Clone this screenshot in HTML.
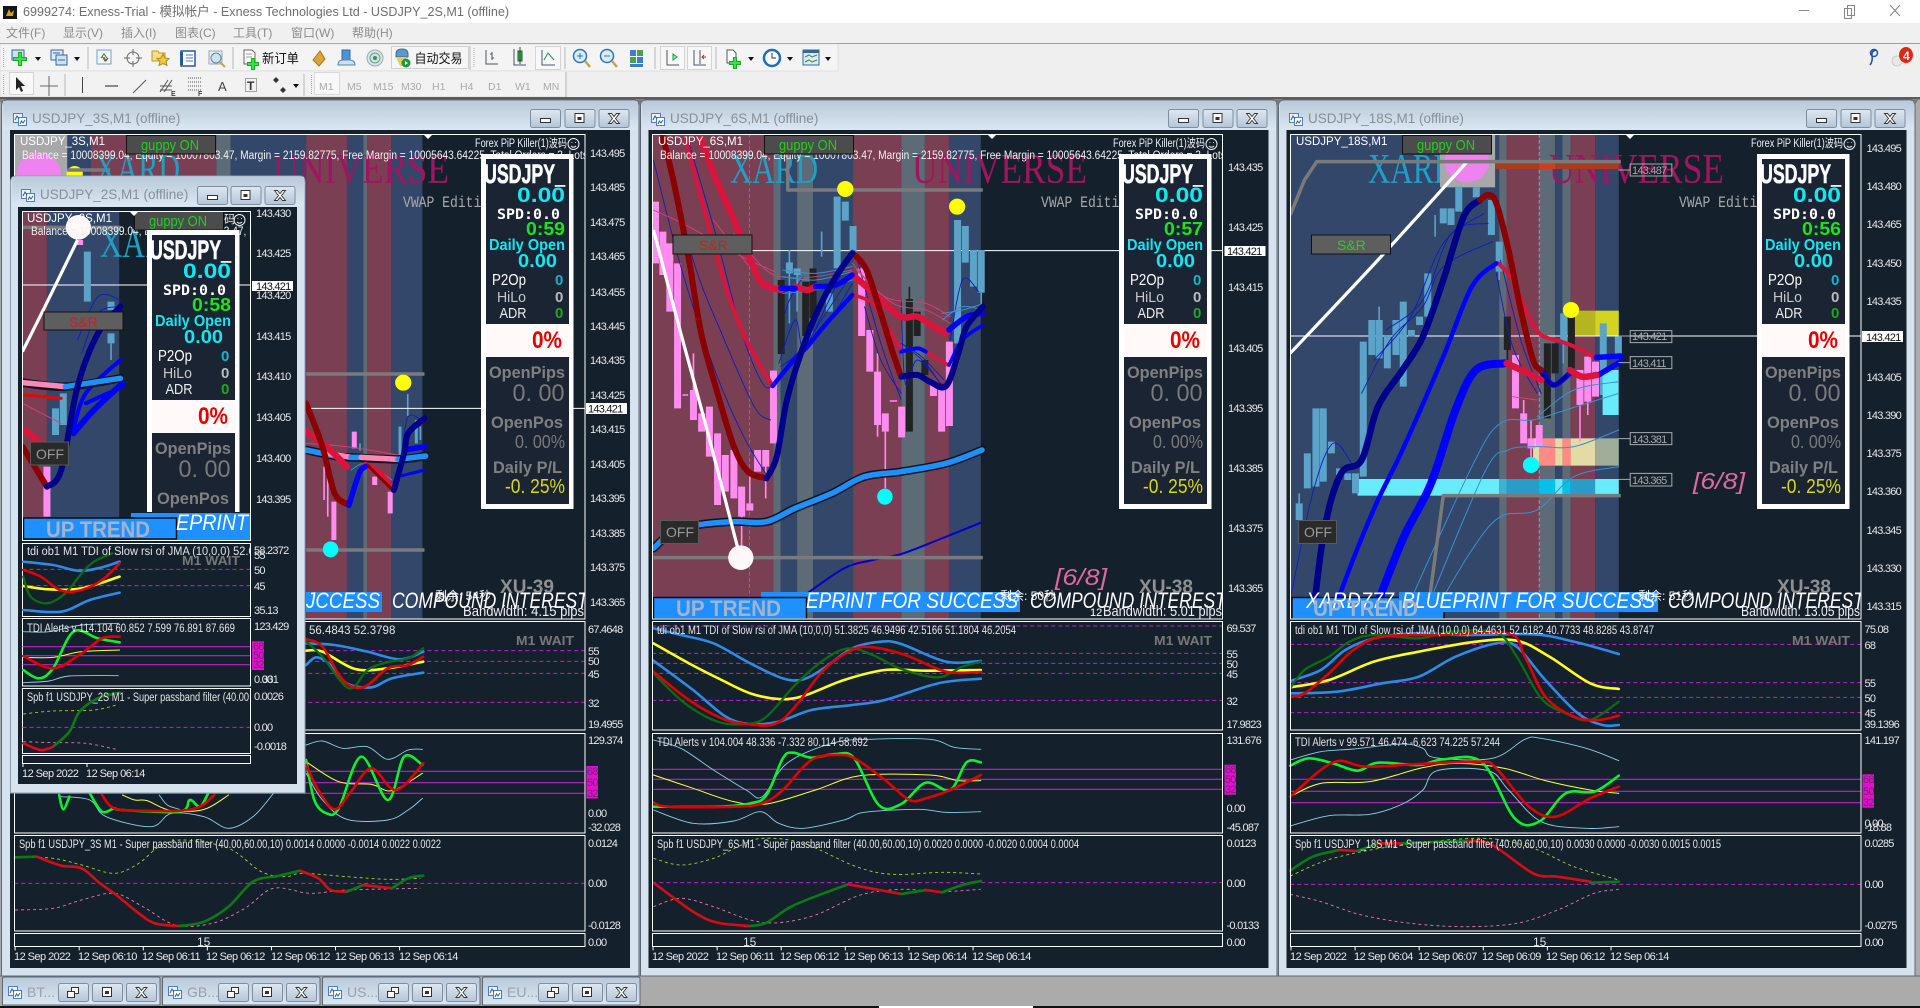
<!DOCTYPE html>
<html><head><meta charset="utf-8"><title>MT4</title>
<style>
html,body{margin:0;padding:0;background:#ababab;width:1920px;height:1008px;overflow:hidden}
svg{display:block}
text{font-family:"Liberation Sans","Noto Sans CJK SC",sans-serif;white-space:pre}
.z *{vector-effect:non-scaling-stroke}
.z polyline,.z path{fill:none;stroke-linejoin:round;stroke-linecap:round}
.a{font-size:11px;letter-spacing:-.75px;fill:#e8e8e8}
.b{letter-spacing:-.55px}
.m{fill:#7a2070!important}
.t{font-size:11.5px;fill:#e4e4e4}
.cap{font-size:13.5px;fill:#8a8f96}
.mn{font-size:12px;fill:#8c8c8c}
.tf{font-size:10.5px;fill:#aaa}
.pk{stroke:#ff8cf0;stroke-width:7;stroke-linecap:butt!important}
.pw{stroke:#ff8cf0;stroke-width:1.6;stroke-linecap:butt!important}
.bc{stroke:#5ba3c8;stroke-width:7;stroke-linecap:butt!important}
.bw{stroke:#5ba3c8;stroke-width:1.6;stroke-linecap:butt!important}
.bk{stroke:#222;stroke-width:7;stroke-linecap:butt!important}
.kw{stroke:#222;stroke-width:1.6;stroke-linecap:butt!important}
.dr{stroke:#8b0000;stroke-width:6}
.cr{stroke:#dc143c;stroke-width:6.5}
.nb{stroke:#00008b;stroke-width:6}
.bl{stroke:#0000ff;stroke-width:5.5}
.tn{stroke:#0a1fc0;stroke-width:.9}
.tp{stroke:#d8407a;stroke-width:.9}
.ts{stroke:#3a90d0;stroke-width:1}
.gl{stroke:#7a7a7a;stroke-width:3.5;stroke-linecap:butt!important}
.wl{stroke:#fff;stroke-width:3.2;stroke-linecap:butt!important}
.ma0{stroke:#10141c;stroke-width:8.5}
.ma{stroke:#1e90ff;stroke-width:5.5}
.lb{stroke:#2e8ae6;stroke-width:2.6}
.rd{stroke:#e00000;stroke-width:2.6}
.dg{stroke:#0b6b12;stroke-width:2.3}
.ye{stroke:#ffff20;stroke-width:2.6}
.lm{stroke:#10ee30;stroke-width:2.6}
.yt{stroke:#ffff40;stroke-width:1}
.lt{stroke:#8ccfe8;stroke-width:.9}
.mg{stroke:#c020c8;stroke-width:1.1;stroke-linecap:butt!important}
.md{stroke:#c020c8;stroke-width:1;stroke-dasharray:4 3;stroke-linecap:butt!important}
.gd{stroke:#a6d030;stroke-width:.9;stroke-dasharray:3 3;stroke-linecap:butt!important}
.pd{stroke:#e878a8;stroke-width:.9;stroke-dasharray:3 3;stroke-linecap:butt!important}
.gr{stroke:#0c7a14;stroke-width:2.6}
.re{stroke:#d80c14;stroke-width:2.6}
.pb{fill:none;stroke:#fff;stroke-width:1}
.hb{font-weight:bold}
.us{stroke:#fff;stroke-width:.6}
</style></head><body>
<svg width="1920" height="1008" viewBox="0 0 1920 1008" xmlns="http://www.w3.org/2000/svg">
<defs>
<linearGradient id="capg" x1="0" y1="0" x2="0" y2="1"><stop offset="0" stop-color="#b9c9da"/><stop offset="1" stop-color="#dbe7f2"/></linearGradient>
<linearGradient id="btg" x1="0" y1="0" x2="0" y2="1"><stop offset="0" stop-color="#dfe8f1"/><stop offset="1" stop-color="#b4c5d8"/></linearGradient>
<g id="bb"><rect x=".5" y=".5" width="30" height="18" rx="2" fill="url(#btg)" stroke="#7e8fa3"/></g>
<g id="bmin"><use href="#bb"/><rect x="10.5" y="9.5" width="10" height="4" fill="#fff" stroke="#333"/></g>
<g id="bmax"><use href="#bb"/><rect x="10.5" y="4.5" width="9" height="9" fill="#fff" stroke="#333"/><rect x="13" y="8" width="4" height="3" fill="#333"/></g>
<g id="bcl"><use href="#bb"/><path d="M10 4.5h3l2.500 3 2.500-3h3l-4 5 4 5h-3l-2.500-3-2.500 3h-3l4-5z" fill="#fff" stroke="#333" stroke-width=".9"/></g>
<g id="brs"><use href="#bb"/><rect x="13.500" y="4.500" width="7" height="6" fill="#fff" stroke="#333"/><rect x="9.500" y="8.500" width="7" height="6" fill="#fff" stroke="#333"/></g>
<g id="cic"><rect x=".5" y="1.500" width="9" height="9" fill="#eef4fb" stroke="#4d80b8"/><rect x="5.500" y="5.500" width="8" height="8" fill="#fff" stroke="#4d80b8"/><path d="M2 8l2-4 2 3M7 12l1.500-3 1.500 2 2-3" fill="none" stroke="#2d5f99"/></g>
<g id="drop"><path d="M0 0h6l-3 4z" fill="#111"/></g>
<clipPath id="c1"><rect x="14" y="134" width="571" height="485"/></clipPath>
<clipPath id="c2"><rect x="652" y="134" width="570" height="485"/></clipPath>
<clipPath id="c3"><rect x="1290" y="134" width="571" height="485"/></clipPath>
<clipPath id="cf"><rect x="22" y="211" width="228" height="329"/></clipPath>
<clipPath id="chud"><rect x="100" y="200" width="180" height="312"/></clipPath>
<clipPath id="cfp2"><rect x="22" y="543" width="228" height="74"/></clipPath>
<clipPath id="cfp3"><rect x="22" y="618" width="228" height="68"/></clipPath>
<clipPath id="cfp4"><rect x="22" y="688" width="228" height="65"/></clipPath>
<clipPath id="cp2"><rect x="14" y="621" width="571" height="109"/></clipPath>
<clipPath id="cp2b"><rect x="652" y="621" width="570" height="109"/></clipPath>
<clipPath id="cp2c"><rect x="1290" y="621" width="571" height="109"/></clipPath>
</defs>

<!-- app chrome -->
<rect width="1920" height="1008" fill="#ababab"/>
<rect width="1920" height="23" fill="#fff"/>
<rect x="3" y="6" width="14" height="13" fill="#161616"/><path d="M6 16l3-7 2 4 3-3-1 6z" fill="#c9a227"/>
<text x="23" y="16" font-size="13" fill="#6e6e6e" textLength="486" lengthAdjust="spacingAndGlyphs">6999274: Exness-Trial - 模拟帐户 - Exness Technologies Ltd - USDJPY_2S,M1 (offline)</text>
<path d="M1799 10.500h10" stroke="#888"/><rect x="1844.500" y="8.500" width="7" height="10" fill="#fff" stroke="#888"/><rect x="1847.500" y="5.500" width="7" height="10" fill="none" stroke="#888"/><path d="M1890 5l10 11M1900 5l-10 11" stroke="#888"/>
<rect y="23" width="1920" height="20" fill="#f0f0f0"/>
<g class="mn"><text x="6" y="37" class="mn">文件(F)</text><text x="63" y="37" class="mn">显示(V)</text><text x="121" y="37" class="mn">插入(I)</text><text x="175" y="37" class="mn">图表(C)</text><text x="233" y="37" class="mn">工具(T)</text><text x="291" y="37" class="mn">窗口(W)</text><text x="352" y="37" class="mn">帮助(H)</text></g>
<rect y="43" width="1920" height="54" fill="#efefef"/>
<rect y="43" width="1920" height="1" fill="#a0a0a0"/>
<rect y="44" width="838" height="27" fill="#f4f4f4" stroke="#cfcfcf" stroke-width=".5"/>
<rect y="71" width="566" height="26" fill="#f2f2f2" stroke="#cfcfcf" stroke-width=".5"/>
<rect y="97" width="1920" height="2.500" fill="#5c5c5c"/>
<!-- toolbar 1 -->
<g stroke="#b8b8b8" fill="none">
<path d="M88 47v22M233 47v22M470 46v24M565 47v22M655 47v22M716 47v22"/>
<path d="M65 74v22M304 74v22M566 72v25" />
</g>
<g stroke-dasharray="1 1" stroke="#aaa"><path d="M3.500 48v20M3.500 75v20M311.500 75v20M474 48v20"/></g>
<g>
<rect x="12" y="50" width="12" height="10" fill="#cfe0f3" stroke="#31689f"/><path d="M20 52v14M13 59h14" stroke="#12b020" stroke-width="4"/><path d="M20 53v12M14 59h12" stroke="#3fe04a" stroke-width="2"/>
<use href="#drop" x="35" y="57"/>
<rect x="51" y="50" width="12" height="10" fill="#dfeafa" stroke="#31689f"/><rect x="56" y="55" width="11" height="10" fill="#cfe0f3" stroke="#31689f"/><path d="M53 53h7M58 60h7" stroke="#31689f"/>
<use href="#drop" x="74" y="57"/>
<rect x="97" y="50" width="14" height="14" fill="#f3f8fd" stroke="#6ea1d0"/><path d="M101 58l3-4 3 4M102 56l3 5 3-3" fill="none" stroke="#1e8a35"/><path d="M104 57l2 4 2-3" fill="none" stroke="#c53030"/>
<circle cx="133" cy="58" r="6" fill="none" stroke="#666"/><path d="M133 49v6M133 61v6M124 58h6M136 58h6" stroke="#666"/>
<path d="M152 51h6l1 2h6v8h-13z" fill="#f6de86" stroke="#b79632"/><path d="M163 54l2 4 4 .5-3 3 1 4-4-2-4 2 1-4-3-3 4-.5z" fill="#f6c93a" stroke="#b08a1a"/>
<rect x="181" y="51" width="14" height="15" fill="#fff" stroke="#245a9c" stroke-width="1.500"/><path d="M181.500 52v13" stroke="#245a9c" stroke-width="3"/><path d="M186 55h7M186 58h7M186 61h7" stroke="#5578a8"/>
<rect x="209" y="51" width="13" height="13" fill="#e9edf2" stroke="#9ba6b4"/><circle cx="216" cy="58" r="5" fill="#cfe2f4" stroke="#5b86ad"/><path d="M220 62l5 5" stroke="#c8a24a" stroke-width="2"/>
<path d="M244 50h8l3 3v11h-11z" fill="#fff" stroke="#666"/><path d="M246 54h6M246 57h6" stroke="#999"/><path d="M253 58v12M247 64h12" stroke="#12b020" stroke-width="4"/><path d="M253 59v10M248 64h10" stroke="#3fe04a" stroke-width="2"/>
<text x="262" y="63" font-size="13" fill="#111" textLength="37" lengthAdjust="spacingAndGlyphs">新订单</text>
<path d="M313 60l7-9 5 8-6 7z" fill="#dca53a" stroke="#a77717"/>
<rect x="342" y="50" width="8" height="10" fill="#4c94d8" stroke="#2c6ba8"/><path d="M338 65q0-5 5-5h6q6 0 6 5z" fill="#cfe0f0" stroke="#5b86ad"/>
<circle cx="375" cy="58" r="8" fill="#d8e7ef" stroke="#9ab"/><circle cx="375" cy="58" r="5" fill="#cfe6c8" stroke="#6aa66a"/><circle cx="375" cy="58" r="2" fill="#3b7ac0"/>
<rect x="391.500" y="46.500" width="77" height="22" fill="#f6f6f6" stroke="#cfcfcf"/>
<path d="M396 54q0-5 6-5t6 5v3h-12z" fill="#5e98c8" stroke="#3e6c98"/><path d="M396 57l4 9h8l-2-9z" fill="#e3ce58"/><circle cx="406" cy="63" r="4.500" fill="#1d9a3a"/><path d="M405 61v4l3-2z" fill="#fff"/>
<text x="414.500" y="63" font-size="13" fill="#111" textLength="48" lengthAdjust="spacingAndGlyphs">自动交易</text>
<g stroke="#47566a" fill="none"><path d="M486 50v14h12M492 52v8M490 54h2M492 58h2"/><path d="M514 49v16h12"/></g>
<rect x="518" y="51" width="4" height="10" fill="#37b14b" stroke="#24582f"/><path d="M520 47v17" stroke="#24582f"/>
<rect x="535.500" y="46.500" width="25" height="23" fill="#f8f8f8" stroke="#d3d3d3"/><path d="M542 50v15h13" stroke="#47566a" fill="none"/><path d="M544 60l4-7 6 7" fill="none" stroke="#2a8a6a"/>
<circle cx="580" cy="56" r="6.500" fill="#d9ecfa" stroke="#3272ae" stroke-width="1.500"/><path d="M577 56h6M580 53v6" stroke="#3272ae"/><path d="M585 61l5 6" stroke="#c8a24a" stroke-width="2.500"/>
<circle cx="607" cy="56" r="6.500" fill="#d9ecfa" stroke="#3272ae" stroke-width="1.500"/><path d="M604 56h6" stroke="#3272ae"/><path d="M612 61l5 6" stroke="#c8a24a" stroke-width="2.500"/>
<rect x="630" y="50" width="6" height="6" fill="#3a7ec8"/><rect x="637" y="50" width="6" height="6" fill="#4da04d"/><rect x="630" y="57" width="6" height="6" fill="#4da04d"/><rect x="637" y="57" width="6" height="6" fill="#3a7ec8"/><rect x="630" y="64" width="13" height="3" fill="#3a7ec8"/>
<rect x="660.500" y="46.500" width="24" height="23" fill="#f8f8f8" stroke="#d3d3d3"/><path d="M667 50v15h12" stroke="#47566a" fill="none"/><path d="M673 54l4 3-4 3z" fill="#b5e6b5" stroke="#1d9a3a"/>
<rect x="687.500" y="46.500" width="24" height="23" fill="#f8f8f8" stroke="#d3d3d3"/><path d="M694 50v15h12M700 50v14" stroke="#47566a" fill="none"/><path d="M706 57h-4M704 55l-2 2 2 2" stroke="#b03a12" fill="none"/>
<path d="M727 50h6l3 3v10h-9z" fill="#fff" stroke="#555"/><path d="M735 57v12M729 63h12" stroke="#12b020" stroke-width="4"/><path d="M735 58v10M730 63h10" stroke="#3fe04a" stroke-width="2"/>
<use href="#drop" x="748" y="57"/>
<circle cx="772" cy="58" r="8" fill="#fff" stroke="#1e6fb8" stroke-width="2.500"/><path d="M772 53v5h4" stroke="#333" fill="none"/>
<use href="#drop" x="787" y="57"/>
<rect x="803" y="50" width="16" height="15" fill="#dfe9f4" stroke="#31689f"/><rect x="803" y="50" width="16" height="3" fill="#31689f"/><path d="M805 57l4-2 3 2 5-2M805 62l4-2 3 2 5-2" fill="none" stroke="#3b8a3b"/>
<use href="#drop" x="825" y="57"/>
</g>
<path d="M1876 50q-5 1-4 6t-2 9" fill="none" stroke="#1b4fb5" stroke-width="1.500"/><circle cx="1874" cy="53" r="3.500" fill="none" stroke="#1b4fb5" stroke-width="1.500"/>
<circle cx="1897" cy="61" r="5" fill="#e8e8e8" stroke="#ccc"/><ellipse cx="1906" cy="55" rx="7" ry="8" fill="#d92a14"/><text x="1903" y="60" font-size="12" font-weight="bold" fill="#fff">4</text>
<!-- toolbar 2 -->
<rect x="9.500" y="72.500" width="24" height="22" fill="#f8f8f8" stroke="#d3d3d3"/><path d="M16 77v13l3-3 2 5 2-1-2-5h4z" fill="#222"/>
<path d="M49 76v20M40 86h18" stroke="#666"/><path d="M82.500 77v16" stroke="#444"/><path d="M105 86h13" stroke="#444" stroke-width="1.200"/><path d="M133 93l13-13" stroke="#666" stroke-width="1.200"/>
<path d="M160 92l8-12M164 92l8-12M160 86h12M160 90h12" stroke="#555" fill="none"/><text x="171" y="96" font-size="7" fill="#444" font-weight="bold">E</text>
<path d="M188 78h13M188 82h13M188 86h13M188 90h13" stroke="#555" stroke-dasharray="1 1"/><text x="198" y="96" font-size="7" fill="#444" font-weight="bold">F</text>
<text x="218" y="91" font-size="13" fill="#444">A</text><rect x="245.500" y="78.500" width="11" height="13" fill="none" stroke="#555" stroke-dasharray="1 1"/><text x="247" y="90" font-size="12" fill="#333" font-weight="bold">T</text>
<path d="M273 80l3-3 3 3-3 3zM280 90l3-3 3 3-3 3z" fill="#333"/><use href="#drop" x="293" y="84"/>
<rect x="314.500" y="72.500" width="25" height="22" fill="#f8f8f8" stroke="#d9d9d9"/>
<g><text x="319" y="90" class="tf">M1</text><text x="347" y="90" class="tf">M5</text><text x="373" y="90" class="tf">M15</text><text x="401" y="90" class="tf">M30</text><text x="432" y="90" class="tf">H1</text><text x="460" y="90" class="tf">H4</text><text x="488" y="90" class="tf">D1</text><text x="515" y="90" class="tf">W1</text><text x="543" y="90" class="tf">MN</text></g>

<!-- window frames -->
<g>
<path d="M1.500 976V106q0-6 6-6H634q5 0 5 6V976z" fill="#d6e2ee" stroke="#59677a"/>
<rect x="3" y="101" width="635" height="29" fill="url(#capg)"/>
<path d="M640.500 976V106q0-6 6-6H1272q5 0 5 6V976z" fill="#d6e2ee" stroke="#59677a"/>
<rect x="642" y="101" width="634" height="29" fill="url(#capg)"/>
<path d="M1278.500 976V106q0-6 6-6H1910q5 0 5 6V976z" fill="#d6e2ee" stroke="#59677a"/>
<rect x="1280" y="101" width="634" height="29" fill="url(#capg)"/>
<path d="M0 100l3 0-1.500 5zM636 100h8l-4 5zM1274 100h8l-4 5zM1912 100h6l-3 5z" fill="#777"/>
</g>
<use href="#cic" x="13" y="112"/><text x="32" y="123" class="cap">USDJPY_3S,M1 (offline)</text>
<use href="#bmin" x="530" y="109"/><use href="#bmax" x="564.500" y="109"/><use href="#bcl" x="598.500" y="109"/>
<use href="#cic" x="651" y="112"/><text x="670" y="123" class="cap">USDJPY_6S,M1 (offline)</text>
<use href="#bmin" x="1168" y="109"/><use href="#bmax" x="1202.500" y="109"/><use href="#bcl" x="1236.500" y="109"/>
<use href="#cic" x="1289" y="112"/><text x="1308" y="123" class="cap">USDJPY_18S,M1 (offline)</text>
<use href="#bmin" x="1806" y="109"/><use href="#bmax" x="1840.500" y="109"/><use href="#bcl" x="1874.500" y="109"/>
<rect x="10" y="130" width="620" height="838" fill="#15202d"/>
<rect x="648.500" y="130" width="620" height="838" fill="#15202d"/>
<rect x="1286.500" y="130" width="620" height="838" fill="#15202d"/>

<!-- ============ WINDOW 1 main ============ -->
<g clip-path="url(#c1)">
<g class="z" transform="translate(0,100) scale(.40816,.33333)">
<rect x="35" y="103" width="130" height="1460" fill="#a8a8a8"/>
<rect x="165" y="103" width="58" height="1460" fill="#33476b"/>
<rect x="223" y="103" width="307" height="1460" fill="#7a3f52"/>
<rect x="530" y="103" width="35" height="1460" fill="#5c6b76"/>
<rect x="565" y="103" width="185" height="1460" fill="#33476b"/>
<rect x="750" y="103" width="100" height="1460" fill="#7a3f52"/>
<rect x="850" y="103" width="40" height="1460" fill="#33476b"/>
<rect x="890" y="103" width="10" height="1460" fill="#5c6b76"/>
<rect x="900" y="103" width="58" height="1460" fill="#7a3f52"/>
<rect x="958" y="103" width="77" height="1460" fill="#33476b"/>
<ellipse cx="95" cy="225" rx="55" ry="66" fill="#ee82ee"/>
<ellipse cx="183" cy="222" rx="20" ry="24" fill="#ffff00"/>
<path class="gl" d="M165 210H270M750 822H1040M750 1350H1040"/>
</g>
<text x="20" y="145" font-size="11.500" fill="#fff">USDJPY_3S,M1</text>
<text x="95" y="183" font-size="42" fill="#1f9fc6" textLength="85" lengthAdjust="spacingAndGlyphs" style="font-family:'Liberation Serif',serif">XARD</text>
<text x="273" y="183" font-size="42" fill="#a01560" textLength="176" lengthAdjust="spacingAndGlyphs" style="font-family:'Liberation Serif',serif">UNIVERSE</text>
<text x="403" y="207" font-size="16" fill="#a8a8a8" textLength="94" lengthAdjust="spacingAndGlyphs" style="font-family:'Liberation Mono',monospace">VWAP Edition</text>
<g class="z" transform="translate(0,100) scale(.40816,.33333)">
<path class="pk" d="M818 1205V1320M918 1130V1155M956 1175V1240M868 995V1045" style="stroke-width:5"/>
<path class="pw" d="M794 1100V1200M803 1130V1250M958 1240V1180"/>
<path class="bc" d="M980 980V1070M1020 960V1030" style="stroke-width:3"/>
<path class="bw" d="M999 882V948M1030 980V1020M882 1030V1052"/>
<path class="wl" style="stroke-width:1" d="M750 925H1433"/>
<polyline class="tn" points="985,1060 1000,950 1040,965"/>
<polyline class="tp" points="750,1030 850,1040 975,1065"/>
<polyline class="ts" points="860,1110 900,1090 960,1140"/>
<polyline class="ma0" points="750,1050 830,1070 860,1072 975,1078 1043,1068"/>
<polyline class="ma" points="750,1050 830,1070"/>
<polyline class="ma" style="stroke:#ff88bb" points="800,1060 860,1072"/>
<polyline class="ma" points="860,1072 885,1072"/>
<polyline class="ma" style="stroke:#ff88bb" points="885,1072 975,1078"/>
<polyline class="ma" points="975,1078 1043,1068"/>
<polyline class="cr" points="750,995 800,1040 850,1100"/>
<polyline class="cr" points="895,1095 930,1120 965,1170"/>
<polyline class="dr" points="750,910 790,1040 820,1180 855,1215"/>
<polyline class="dr" style="stroke-width:3" points="900,1095 960,1168"/>
<polyline class="bl" points="855,1215 880,1120 895,1100"/>
<polyline class="bl" style="stroke-width:3" points="975,1130 1040,1110"/>
<polyline class="bl" points="990,1050 1040,1040"/>
<polyline class="nb" points="965,1170 990,1060 1000,1000 1040,955"/>
<ellipse cx="988" cy="848" rx="20" ry="24" fill="#ffff00"/>
<ellipse cx="810" cy="1348" rx="19" ry="24" fill="#00ffff"/>
</g>
<text x="22" y="159" font-size="11.500" fill="#f0f0f0" textLength="600" lengthAdjust="spacingAndGlyphs">Balance = 10008399.04, Equity = 10007803.47, Margin = 2159.82775, Free Margin = 10005643.64225, Total Orders = 3, Lots = 30.0,</text>
<rect x="126.500" y="135.500" width="89" height="18.500" fill="#4c4c4c" stroke="#111"/>
<text x="141" y="150" font-size="15" fill="#1fd01f" textLength="58" lengthAdjust="spacingAndGlyphs">guppy ON</text>
<text x="475" y="147" font-size="11.500" fill="#f0f0f0" textLength="92" lengthAdjust="spacingAndGlyphs">Forex PiP Killer(1)波码</text>
<circle cx="573.500" cy="144" r="5.500" fill="none" stroke="#eee"/><path d="M571 146q2.500 2.500 5 0M571.500 142.500h.8M575 142.500h.8" stroke="#eee" fill="none"/>
<path d="M423 134h10l-5 5z" fill="#fff"/>
<rect x="306" y="592" width="76" height="20" fill="#1e90ff"/>
<text x="306" y="608" font-size="22" font-style="italic" fill="#fff" textLength="74" lengthAdjust="spacingAndGlyphs">JCCESS</text>
<text x="392" y="608" font-size="22" font-style="italic" fill="#fff" textLength="196" lengthAdjust="spacingAndGlyphs">COMPOUND INTEREST</text>
<text x="500" y="593" font-size="19" font-weight="bold" fill="#909090" textLength="54" lengthAdjust="spacingAndGlyphs">XU-39</text>
<text x="435" y="600" font-size="12" fill="#fff">剩余: 54秒</text>
<text x="463" y="616" font-size="15" fill="#eee" textLength="121" lengthAdjust="spacingAndGlyphs">Bandwidth: 4.15 pips</text>
</g>

<!-- ============ WINDOW 2 main ============ -->
<g clip-path="url(#c2)">
<g class="z" transform="translate(640,100) scale(.40816,.33333)">
<rect x="30" y="103" width="297" height="1460" fill="#7a3f52"/>
<rect x="327" y="103" width="18" height="1460" fill="#5c6b76"/>
<rect x="345" y="103" width="40" height="1460" fill="#33476b"/>
<rect x="385" y="103" width="39" height="1460" fill="#5c6b76"/>
<rect x="424" y="103" width="98" height="1460" fill="#33476b"/>
<rect x="522" y="103" width="118" height="1460" fill="#7a3f52"/>
<rect x="640" y="103" width="58" height="1460" fill="#5c6b76"/>
<rect x="698" y="103" width="59" height="1460" fill="#7a3f52"/>
<rect x="757" y="103" width="78" height="1460" fill="#33476b"/>
<path d="M268 103V1560" stroke="#5a8fc0" stroke-width=".8" stroke-dasharray="3 3"/>
</g>
<text x="730" y="183" font-size="42" fill="#1f9fc6" textLength="88" lengthAdjust="spacingAndGlyphs" style="font-family:'Liberation Serif',serif">XARD</text>
<text x="912" y="183" font-size="42" fill="#a01560" textLength="175" lengthAdjust="spacingAndGlyphs" style="font-family:'Liberation Serif',serif">UNIVERSE</text>
<text x="1041" y="207" font-size="16" fill="#a8a8a8" textLength="94" lengthAdjust="spacingAndGlyphs" style="font-family:'Liberation Mono',monospace">VWAP Edition</text>
<g class="z" transform="translate(640,100) scale(.40816,.33333)">
<path class="wl" style="stroke-width:1" d="M30 452H1427"/>
<path class="pk" d="M38 305V490M56 395V525M73 430V635M92 490V925M131 870V960M151 940V995M170 920V1070M190 1000V1215M209 1065V1175M230 1050V1195M249 1160V1250M269 1210V1232M288 1050V1115M308 1050V1100M327 812V1030M543 505V708M563 690V815M582 815V975M601 940V995M641 920V1012M719 850V888M739 865V995M758 725V978"/>
<path class="pw" d="M131 760V870M249 1250V1350M269 1125V1210M308 1100V1195M582 760V1010M601 995V1165M104 885H118M612 903H630"/>
<path class="bk" d="M346 540V762M406 545V708M424 505V655M660 597V995M679 635V708M698 780V825"/>
<path class="kw" d="M660 560V597"/>
<path class="bc" d="M366 487V520M385 505V525M464 580V635M483 290V505M503 305V362M522 378V460M778 360V730M797 378V488M817 450V560M836 450V578"/>
<path class="bw" d="M366 450V670M385 525V635M445 395V470M836 578V620"/>
<polyline class="tn" points="33,180 100,500 180,800 250,1000 310,1125"/>
<polyline class="tn" points="60,140 130,480 200,700 280,920 320,960"/>
<polyline class="tn" points="120,130 180,380 250,700 300,850 325,858"/>
<polyline class="tn" points="340,790 380,660 400,745 440,660 520,450"/>
<polyline class="tn" points="345,800 400,745 450,650 520,520"/>
<polyline class="tn" points="360,790 410,730 470,650 520,550"/>
<polyline class="tn" points="355,640 370,590 400,530"/>
<polyline class="tn" points="640,600 650,850 680,780 740,855"/>
<polyline class="tn" points="640,730 690,770 745,840"/>
<polyline class="tn" points="650,740 700,790 740,860"/>
<polyline class="tn" points="530,470 590,730 640,900"/>
<polyline class="tn" points="550,620 590,780 640,880"/>
<polyline class="tn" points="760,720 790,540 830,575"/>
<polyline class="tp" points="230,400 300,500 345,530 430,530 520,510"/>
<polyline class="tp" points="33,330 120,380 250,470 330,515"/>
<polyline class="tp" points="180,360 290,530 345,560"/>
<polyline class="tp" points="520,490 600,590 700,610 760,650"/>
<polyline class="tp" points="530,510 620,610 700,630 760,670"/>
<polyline class="ts" points="350,510 430,520 520,500"/>
<polyline class="ts" points="350,530 430,540 520,515"/>
<polyline class="ts" points="350,580 430,570 520,540"/>
<polyline class="ts" points="740,640 790,630 838,612"/>
<polyline class="ts" points="740,660 790,620 838,630"/>
<polyline class="cr" points="145,103 180,220 230,360 270,480 300,550 345,570"/>
<polyline class="cr" points="380,560 410,570 430,560"/>
<polyline class="cr" points="520,525 555,560 590,600 640,650 680,650 720,680 750,700"/>
<polyline class="cr" style="stroke-width:4" points="110,110 160,340 210,560 260,720 325,858"/>
<polyline class="cr" style="stroke-width:3.5" points="525,585 570,610 600,670 640,750"/>
<polyline class="cr" style="stroke-width:3.5" points="700,755 755,795"/>
<polyline class="dr" points="55,103 85,260 120,480 150,700 190,880 230,1040 265,1115 310,1135"/>
<polyline class="dr" points="522,460 555,510 590,640 620,760 640,830"/>
<polyline class="dr" style="stroke-width:4" points="715,850 745,858"/>
<polyline class="bl" points="345,565 380,565"/>
<polyline class="bl" points="430,560 480,555 520,525"/>
<polyline class="bl" style="stroke-width:4.5" points="325,858 370,790 410,740 450,680 520,585"/>
<polyline class="bl" style="stroke-width:4" points="640,755 680,745 700,755"/>
<polyline class="bl" points="757,690 800,650 840,640"/>
<polyline class="bl" style="stroke-width:3.5" points="757,795 790,720 840,675"/>
<polyline class="nb" points="310,1135 335,1070 360,900 400,740 440,620 480,530 520,460"/>
<polyline class="nb" points="640,830 680,825 710,845 750,858 780,760 800,680 840,620"/>
<polyline class="ma0" points="33,1345 80,1295 140,1275 230,1265 310,1265 380,1225 470,1180 550,1130 640,1115 750,1090 838,1050"/>
<polyline class="ma" points="33,1345 80,1295 140,1275 230,1265 310,1265 380,1225 470,1180 550,1130 640,1115 750,1090 838,1050"/>
<polyline style="stroke:#0000cd;stroke-width:2" points="410,1480 500,1405 570,1380 640,1362 730,1320 835,1268"/>
<polyline class="wl" points="33,390 100,700 160,970 245,1370"/>
<path class="gl" d="M362 103V270H840M33 1373H840"/>
<ellipse cx="503" cy="267" rx="20" ry="24" fill="#ffff00"/>
<ellipse cx="777" cy="320" rx="20" ry="24" fill="#ffff00"/>
<ellipse cx="600" cy="1190" rx="19" ry="24" fill="#00ffff"/>
<ellipse cx="247" cy="1373" rx="31" ry="37" fill="#fff8f8"/>
</g>
<text x="658" y="145" font-size="11.500" fill="#fff">USDJPY_6S,M1</text>
<text x="660" y="159" font-size="11.500" fill="#f0f0f0" textLength="600" lengthAdjust="spacingAndGlyphs">Balance = 10008399.04, Equity = 10007803.47, Margin = 2159.82775, Free Margin = 10005643.64225, Total Orders = 3, Lots = 30.0,</text>
<rect x="764.500" y="135.500" width="89" height="18.500" fill="#4c4c4c" stroke="#111"/>
<text x="779" y="150" font-size="15" fill="#1fd01f" textLength="58" lengthAdjust="spacingAndGlyphs">guppy ON</text>
<text x="1113" y="147" font-size="11.500" fill="#f0f0f0" textLength="92" lengthAdjust="spacingAndGlyphs">Forex PiP Killer(1)波码</text>
<circle cx="1211.500" cy="144" r="5.500" fill="none" stroke="#eee"/><path d="M1209 146q2.500 2.500 5 0M1209.500 142.500h.8M1213 142.500h.8" stroke="#eee" fill="none"/>
<path d="M987 134h10l-5 5z" fill="#fff"/>
<rect x="673" y="235" width="79" height="19" fill="#5e5e5e" stroke="#111"/><text x="699" y="250" font-size="14" fill="#cc2020">S&amp;R</text>
<rect x="660.500" y="520.500" width="38" height="23" fill="#2a2a2a" stroke="#5a5a5a"/><text x="666" y="537" font-size="14" fill="#999">OFF</text>
<text x="1055" y="585" font-size="23" font-style="italic" fill="#dc6aa0" textLength="52" lengthAdjust="spacingAndGlyphs">[6/8]</text>
<rect x="761" y="592" width="259" height="20" fill="#1e90ff"/>
<rect x="653.500" y="597.500" width="153" height="21.500" fill="#1e90ff" stroke="#0a0f16" stroke-width="1.500"/>
<text x="806" y="608" font-size="22" font-style="italic" fill="#fff" textLength="212" lengthAdjust="spacingAndGlyphs">EPRINT FOR SUCCESS</text>
<text x="676" y="616" font-size="22" font-weight="bold" fill="#a3b3cc" textLength="105" lengthAdjust="spacingAndGlyphs">UP TREND</text>
<text x="1030" y="608" font-size="22" font-style="italic" fill="#fff" textLength="196" lengthAdjust="spacingAndGlyphs">COMPOUND INTEREST</text>
<text x="1139" y="593" font-size="19" font-weight="bold" fill="#909090" textLength="54" lengthAdjust="spacingAndGlyphs">XU-38</text>
<text x="1000" y="600" font-size="12" fill="#fff">剩余: 50秒</text>
<text x="1090" y="616" font-size="11" fill="#fff">12</text>
<text x="1103" y="616" font-size="15" fill="#eee" textLength="119" lengthAdjust="spacingAndGlyphs">Bandwidth: 5.01 pips</text>
</g>

<!-- ============ WINDOW 3 main ============ -->
<g clip-path="url(#c3)">
<g class="z" transform="translate(1280,100) scale(.40816,.33333)">
<rect x="25" y="103" width="512" height="1460" fill="#33476b"/>
<rect x="537" y="103" width="18" height="1460" fill="#5c6b76"/>
<rect x="555" y="103" width="80" height="1460" fill="#7a3f52"/>
<rect x="635" y="103" width="39" height="1460" fill="#5c6b76"/>
<rect x="674" y="103" width="18" height="1460" fill="#33476b"/>
<rect x="692" y="103" width="20" height="1460" fill="#5c6b76"/>
<rect x="712" y="103" width="60" height="1460" fill="#7a3f52"/>
<rect x="772" y="103" width="58" height="1460" fill="#33476b"/>
<path d="M635 103V1560" stroke="#8bb" stroke-width=".8" stroke-dasharray="3 3"/>
</g>
<text x="1368" y="183" font-size="42" fill="#1f9fc6" textLength="88" lengthAdjust="spacingAndGlyphs" style="font-family:'Liberation Serif',serif">XARD</text>
<text x="1549" y="183" font-size="42" fill="#a01560" textLength="175" lengthAdjust="spacingAndGlyphs" style="font-family:'Liberation Serif',serif">UNIVERSE</text>
<text x="1679" y="207" font-size="16" fill="#a8a8a8" textLength="94" lengthAdjust="spacingAndGlyphs" style="font-family:'Liberation Mono',monospace">VWAP Edition</text>
<g class="z" transform="translate(1280,100) scale(.40816,.33333)">
<rect x="392" y="103" width="135" height="159" fill="#a8a8a8"/>
<ellipse cx="458" cy="185" rx="55" ry="62" fill="#ee82ee"/>
<rect x="527" y="190" width="303" height="17" fill="#a83c20"/><rect x="635" y="190" width="39" height="17" fill="#c84020"/>
<rect x="712" y="632" width="60" height="76" fill="#b5b51f"/><rect x="772" y="632" width="58" height="76" fill="#d4d420"/>
<rect x="620" y="1015" width="15" height="82" fill="#e3dba3"/><rect x="635" y="1015" width="39" height="82" fill="#ff8c84"/><rect x="674" y="1015" width="18" height="82" fill="#e3dba3"/><rect x="692" y="1015" width="20" height="82" fill="#ff8c84"/><rect x="712" y="1015" width="60" height="82" fill="#e3dba3"/><rect x="772" y="1015" width="58" height="82" fill="#a0ad98"/>
<rect x="190" y="1137" width="347" height="50" fill="#66ecfa"/><rect x="537" y="1137" width="18" height="50" fill="#3ab5d0"/><rect x="555" y="1137" width="80" height="50" fill="#2a9cc8"/><rect x="635" y="1137" width="39" height="50" fill="#05c0e8"/><rect x="674" y="1137" width="18" height="50" fill="#66ecfa"/><rect x="692" y="1137" width="20" height="50" fill="#05c0e8"/><rect x="712" y="1137" width="60" height="50" fill="#2a9cc8"/><rect x="772" y="1137" width="58" height="50" fill="#66ecfa"/>
<path class="wl" style="stroke-width:1" d="M25 708H1423"/>
<path class="bc" d="M47 1210V1260M67 1060V1165M88 925V1160M106 925V1145M126 1025V1060M146 1105V1125M166 1120V1140M185 1120V1180M204 725V1130M225 660V765M243 660V775M263 705V805M284 660V765M302 605V860M322 690V710M342 650V675M362 520V650M400 325V370M419 325V375M438 260V335M481 262V292M518 300V405M537 425V515M695 640V730M792 670V885M829 710V770"/>
<path class="bw" d="M47 1180V1210M243 620V660M380 345V410M537 515V540M694 730V790"/>
<path class="bc" style="stroke:#66ecfa;stroke-width:16" d="M810 810V945"/>
<path class="bk" d="M557 650V750M655 730V955M674 730V820M714 645V805"/>
<path class="kw" d="M557 750V780"/>
<path class="pk" d="M577 765V925M597 940V1030M615 1015V1045M635 975V1040M735 810V915M754 770V905M773 785V890"/>
<path class="pw" d="M597 900V940M615 960V1075M735 915V1025M754 905V945"/>
<polyline class="tn" points="25,1500 80,1180 130,1030 180,1100"/>
<polyline class="tn" points="200,880 270,720 350,620 400,500 520,425"/>
<polyline class="tn" points="230,780 320,650 400,430 500,340"/>
<polyline class="tn" points="260,690 350,600 420,400 510,370"/>
<polyline class="tn" points="540,480 590,720 640,880"/>
<polyline class="tn" points="530,520 570,740 630,880"/>
<polyline class="tp" points="570,890 630,900"/>
<polyline class="ts" points="370,1555 470,1350 540,1250 630,1230 720,1130 830,1100"/>
<polyline class="ts" points="350,1555 500,1120 560,1050 630,1040 720,1040 830,990"/>
<polyline class="ts" points="300,1555 470,1100 540,970 620,960 700,930 830,880"/>
<polyline class="ts" points="630,950 720,870 830,845"/>
<polyline class="cr" style="stroke-width:4" points="535,490 570,540 610,650 640,705 690,725 730,745 775,775"/>
<polyline class="bl" style="stroke-width:4.5" points="125,1555 185,1360 240,1200 300,1050 400,770 470,560 530,490"/>
<polyline class="bl" style="stroke-width:8" points="225,1555 300,1320 370,1150 430,930 480,810 550,790"/>
<polyline class="nb" style="stroke-width:6.5" points="80,1555 110,1280 150,1120 200,1080 240,920 300,810 350,710 400,540 450,350 490,300"/>
<polyline class="bl" points="640,810 670,855 710,820"/>
<polyline class="bl" points="775,772 835,768"/>
<polyline class="bl" points="780,825 835,785"/>
<polyline class="nb" style="stroke-width:3.5" points="640,820 670,855 700,830"/>
<polyline class="cr" points="555,790 600,815 640,840"/>
<polyline class="cr" points="710,810 740,830 775,825"/>
<polyline class="dr" points="490,300 510,285 530,310 560,450 590,630 620,780 640,810"/>
<polyline class="wl" points="25,760 240,480 460,183"/>
<path class="gl" d="M25 345L60 240L90 185H835M360 1555L400 1187H835"/>
<ellipse cx="713" cy="630" rx="20" ry="24" fill="#ffff00"/>
<ellipse cx="615" cy="1095" rx="20" ry="24" fill="#00ffff"/>
<path d="M830 210H858M830 708H858M830 788H858M830 1016H858M830 1138H858" stroke="#aaa" stroke-width="1"/>
<g fill="none" stroke="#aaa" stroke-width="1"><rect x="858" y="192" width="102" height="36"/><rect x="858" y="692" width="102" height="36"/><rect x="858" y="770" width="102" height="36"/><rect x="858" y="998" width="102" height="36"/><rect x="858" y="1120" width="102" height="38"/></g>
</g>
<g class="a" style="fill:#aaa"><text x="1632" y="174" class="a" style="fill:#aaa">143.487</text><text x="1632" y="340" class="a" style="fill:#aaa">143.421</text><text x="1632" y="367" class="a" style="fill:#aaa">143.411</text><text x="1632" y="443" class="a" style="fill:#aaa">143.381</text><text x="1632" y="484" class="a" style="fill:#aaa">143.365</text></g>
<text x="1296" y="145" font-size="11.500" fill="#fff">USDJPY_18S,M1</text>
<rect x="1402.500" y="135.500" width="89" height="18.500" fill="#4c4c4c" stroke="#111"/>
<text x="1417" y="150" font-size="15" fill="#1fd01f" textLength="58" lengthAdjust="spacingAndGlyphs">guppy ON</text>
<text x="1751" y="147" font-size="11.500" fill="#f0f0f0" textLength="92" lengthAdjust="spacingAndGlyphs">Forex PiP Killer(1)波码</text>
<circle cx="1849.500" cy="144" r="5.500" fill="none" stroke="#eee"/><path d="M1847 146q2.500 2.500 5 0M1847.500 142.500h.8M1851 142.500h.8" stroke="#eee" fill="none"/>
<path d="M1625 134h10l-5 5z" fill="#fff"/>
<rect x="1311.500" y="235" width="79" height="19" fill="#5e5e5e" stroke="#111"/><text x="1337" y="250" font-size="14" fill="#2fc82f">S&amp;R</text>
<rect x="1298.500" y="520.500" width="38" height="23" fill="#2a2a2a" stroke="#5a5a5a"/><text x="1304" y="537" font-size="14" fill="#999">OFF</text>
<text x="1693" y="489" font-size="23" font-style="italic" fill="#dc6aa0" textLength="52" lengthAdjust="spacingAndGlyphs">[6/8]</text>
<rect x="1292" y="597.500" width="152" height="21.500" fill="#1e90ff" stroke="#0a0f16" stroke-width="1.500"/>
<rect x="1399" y="592" width="259" height="20" fill="#1e90ff"/>
<text x="1306" y="608" font-size="22" font-style="italic" fill="#fff" textLength="88" lengthAdjust="spacingAndGlyphs">XARD777</text>
<text x="1402" y="608" font-size="22" font-style="italic" fill="#fff" textLength="253" lengthAdjust="spacingAndGlyphs">BLUEPRINT FOR SUCCESS</text>
<text x="1313" y="616" font-size="22" font-weight="bold" fill="#a3b3cc" textLength="105" lengthAdjust="spacingAndGlyphs">UP TREND</text>
<text x="1668" y="608" font-size="22" font-style="italic" fill="#fff" textLength="196" lengthAdjust="spacingAndGlyphs">COMPOUND INTEREST</text>
<text x="1777" y="593" font-size="19" font-weight="bold" fill="#909090" textLength="54" lengthAdjust="spacingAndGlyphs">XU-38</text>
<text x="1638" y="600" font-size="12" fill="#fff">剩余: 51秒</text>
<text x="1741" y="616" font-size="15" fill="#eee" textLength="119" lengthAdjust="spacingAndGlyphs">Bandwidth: 13.05 pips</text>
</g>

<!-- ==== axis labels main ==== -->
<g>
<text x="590" y="157" class="a">143.495</text><text x="590" y="191" class="a">143.485</text><text x="590" y="226" class="a">143.475</text><text x="590" y="260" class="a">143.465</text><text x="590" y="296" class="a">143.455</text><text x="590" y="330" class="a">143.445</text><text x="590" y="364" class="a">143.435</text><text x="590" y="399" class="a">143.425</text><text x="590" y="433" class="a">143.415</text><text x="590" y="468" class="a">143.405</text><text x="590" y="502" class="a">143.395</text><text x="590" y="537" class="a">143.385</text><text x="590" y="571" class="a">143.375</text><text x="590" y="606" class="a">143.365</text>
<rect x="586" y="403" width="41" height="11" fill="#fff"/><text x="588" y="412.500" class="a" style="fill:#111">143.421</text>
<text x="1228" y="171" class="a">143.435</text><text x="1228" y="231" class="a">143.425</text><text x="1228" y="291" class="a">143.415</text><text x="1228" y="352" class="a">143.405</text><text x="1228" y="412" class="a">143.395</text><text x="1228" y="472" class="a">143.385</text><text x="1228" y="532" class="a">143.375</text><text x="1228" y="592" class="a">143.365</text>
<rect x="1224.500" y="246" width="41" height="10" fill="#fff"/><text x="1227" y="255" class="a" style="fill:#111">143.421</text>
<text x="1866.500" y="152" class="a">143.495</text><text x="1866.500" y="190" class="a">143.480</text><text x="1866.500" y="228" class="a">143.465</text><text x="1866.500" y="267" class="a">143.450</text><text x="1866.500" y="305" class="a">143.435</text><text x="1866.500" y="381" class="a">143.405</text><text x="1866.500" y="419" class="a">143.390</text><text x="1866.500" y="457" class="a">143.375</text><text x="1866.500" y="495" class="a">143.360</text><text x="1866.500" y="534" class="a">143.345</text><text x="1866.500" y="572" class="a">143.330</text><text x="1866.500" y="610" class="a">143.315</text>
<rect x="1862" y="331" width="41" height="11" fill="#fff"/><text x="1866" y="341" class="a" style="fill:#111">143.421</text>
</g>

<!-- ==== HUDs ==== -->
<g id="hud1">
<rect x="481" y="154" width="92.500" height="355" fill="#fff"/><rect x="486" y="159" width="83" height="165" fill="#1a2433"/><rect x="486" y="357" width="83" height="147" fill="#1a2433"/>
<text x="484" y="183" font-size="27" class="hb us" fill="#fff" textLength="81" lengthAdjust="spacingAndGlyphs">USDJPY_</text>
<text x="517" y="202" font-size="21" class="hb" fill="#16e6ef" textLength="48" lengthAdjust="spacingAndGlyphs">0.00</text>
<text x="497" y="219" font-size="14" class="hb" fill="#fff" textLength="63" lengthAdjust="spacingAndGlyphs" style="font-family:'DejaVu Sans Mono',monospace">SPD:0.0</text>
<text x="526" y="235" font-size="18" class="hb" fill="#18e618" textLength="39" lengthAdjust="spacingAndGlyphs">0:59</text>
<text x="489" y="250" font-size="15.500" class="hb" fill="#16e6ef" textLength="76" lengthAdjust="spacingAndGlyphs">Daily Open</text>
<text x="518" y="267" font-size="18.500" class="hb" fill="#16e6ef" textLength="39" lengthAdjust="spacingAndGlyphs">0.00</text>
<text x="492" y="285" font-size="16" fill="#fff" textLength="34" lengthAdjust="spacingAndGlyphs">P2Op</text><text x="555" y="285" font-size="15" class="hb" fill="#16b4c8">0</text>
<text x="497" y="302" font-size="15" fill="#c8c8c8" textLength="29" lengthAdjust="spacingAndGlyphs">HiLo</text><text x="555" y="302" font-size="15" class="hb" fill="#bbb">0</text>
<text x="499.500" y="318" font-size="15" fill="#eee" textLength="27" lengthAdjust="spacingAndGlyphs">ADR</text><text x="555" y="318" font-size="15" class="hb" fill="#1fa81f">0</text>
<rect x="486" y="324" width="83" height="33" fill="#fff9f9"/>
<text x="532" y="348" font-size="24" class="hb" fill="#e40000" textLength="30" lengthAdjust="spacingAndGlyphs">0%</text>
<text x="489" y="378" font-size="17" class="hb" fill="#808080" textLength="76" lengthAdjust="spacingAndGlyphs">OpenPips</text>
<text x="512.500" y="401" font-size="24" fill="#7a7a7a" textLength="52" lengthAdjust="spacingAndGlyphs">0. 00</text>
<text x="491" y="428" font-size="17" class="hb" fill="#808080" textLength="72" lengthAdjust="spacingAndGlyphs">OpenPos</text>
<text x="515" y="448" font-size="18" fill="#7a7a7a" textLength="50" lengthAdjust="spacingAndGlyphs">0. 00%</text>
<text x="493" y="473" font-size="17" class="hb" fill="#808080" textLength="69" lengthAdjust="spacingAndGlyphs">Daily P/L</text>
<text x="505" y="493" font-size="20" fill="#d8d818" textLength="60" lengthAdjust="spacingAndGlyphs">-0. 25%</text>
</g>
<g transform="translate(638,0)">
<rect x="481" y="154" width="92.500" height="355" fill="#fff"/><rect x="486" y="159" width="83" height="165" fill="#1a2433"/><rect x="486" y="357" width="83" height="147" fill="#1a2433"/>
<text x="484" y="183" font-size="27" class="hb us" fill="#fff" textLength="81" lengthAdjust="spacingAndGlyphs">USDJPY_</text>
<text x="517" y="202" font-size="21" class="hb" fill="#16e6ef" textLength="48" lengthAdjust="spacingAndGlyphs">0.00</text>
<text x="497" y="219" font-size="14" class="hb" fill="#fff" textLength="63" lengthAdjust="spacingAndGlyphs" style="font-family:'DejaVu Sans Mono',monospace">SPD:0.0</text>
<text x="526" y="235" font-size="18" class="hb" fill="#18e618" textLength="39" lengthAdjust="spacingAndGlyphs">0:57</text>
<text x="489" y="250" font-size="15.500" class="hb" fill="#16e6ef" textLength="76" lengthAdjust="spacingAndGlyphs">Daily Open</text>
<text x="518" y="267" font-size="18.500" class="hb" fill="#16e6ef" textLength="39" lengthAdjust="spacingAndGlyphs">0.00</text>
<text x="492" y="285" font-size="16" fill="#fff" textLength="34" lengthAdjust="spacingAndGlyphs">P2Op</text><text x="555" y="285" font-size="15" class="hb" fill="#16b4c8">0</text>
<text x="497" y="302" font-size="15" fill="#c8c8c8" textLength="29" lengthAdjust="spacingAndGlyphs">HiLo</text><text x="555" y="302" font-size="15" class="hb" fill="#bbb">0</text>
<text x="499.500" y="318" font-size="15" fill="#eee" textLength="27" lengthAdjust="spacingAndGlyphs">ADR</text><text x="555" y="318" font-size="15" class="hb" fill="#1fa81f">0</text>
<rect x="486" y="324" width="83" height="33" fill="#fff9f9"/>
<text x="532" y="348" font-size="24" class="hb" fill="#e40000" textLength="30" lengthAdjust="spacingAndGlyphs">0%</text>
<text x="489" y="378" font-size="17" class="hb" fill="#808080" textLength="76" lengthAdjust="spacingAndGlyphs">OpenPips</text>
<text x="512.500" y="401" font-size="24" fill="#7a7a7a" textLength="52" lengthAdjust="spacingAndGlyphs">0. 00</text>
<text x="491" y="428" font-size="17" class="hb" fill="#808080" textLength="72" lengthAdjust="spacingAndGlyphs">OpenPos</text>
<text x="515" y="448" font-size="18" fill="#7a7a7a" textLength="50" lengthAdjust="spacingAndGlyphs">0. 00%</text>
<text x="493" y="473" font-size="17" class="hb" fill="#808080" textLength="69" lengthAdjust="spacingAndGlyphs">Daily P/L</text>
<text x="505" y="493" font-size="20" fill="#d8d818" textLength="60" lengthAdjust="spacingAndGlyphs">-0. 25%</text>
</g>
<g transform="translate(1276,0)">
<rect x="481" y="154" width="92.500" height="355" fill="#fff"/><rect x="486" y="159" width="83" height="165" fill="#1a2433"/><rect x="486" y="357" width="83" height="147" fill="#1a2433"/>
<text x="484" y="183" font-size="27" class="hb us" fill="#fff" textLength="81" lengthAdjust="spacingAndGlyphs">USDJPY_</text>
<text x="517" y="202" font-size="21" class="hb" fill="#16e6ef" textLength="48" lengthAdjust="spacingAndGlyphs">0.00</text>
<text x="497" y="219" font-size="14" class="hb" fill="#fff" textLength="63" lengthAdjust="spacingAndGlyphs" style="font-family:'DejaVu Sans Mono',monospace">SPD:0.0</text>
<text x="526" y="235" font-size="18" class="hb" fill="#18e618" textLength="39" lengthAdjust="spacingAndGlyphs">0:56</text>
<text x="489" y="250" font-size="15.500" class="hb" fill="#16e6ef" textLength="76" lengthAdjust="spacingAndGlyphs">Daily Open</text>
<text x="518" y="267" font-size="18.500" class="hb" fill="#16e6ef" textLength="39" lengthAdjust="spacingAndGlyphs">0.00</text>
<text x="492" y="285" font-size="16" fill="#fff" textLength="34" lengthAdjust="spacingAndGlyphs">P2Op</text><text x="555" y="285" font-size="15" class="hb" fill="#16b4c8">0</text>
<text x="497" y="302" font-size="15" fill="#c8c8c8" textLength="29" lengthAdjust="spacingAndGlyphs">HiLo</text><text x="555" y="302" font-size="15" class="hb" fill="#bbb">0</text>
<text x="499.500" y="318" font-size="15" fill="#eee" textLength="27" lengthAdjust="spacingAndGlyphs">ADR</text><text x="555" y="318" font-size="15" class="hb" fill="#1fa81f">0</text>
<rect x="486" y="324" width="83" height="33" fill="#fff9f9"/>
<text x="532" y="348" font-size="24" class="hb" fill="#e40000" textLength="30" lengthAdjust="spacingAndGlyphs">0%</text>
<text x="489" y="378" font-size="17" class="hb" fill="#808080" textLength="76" lengthAdjust="spacingAndGlyphs">OpenPips</text>
<text x="512.500" y="401" font-size="24" fill="#7a7a7a" textLength="52" lengthAdjust="spacingAndGlyphs">0. 00</text>
<text x="491" y="428" font-size="17" class="hb" fill="#808080" textLength="72" lengthAdjust="spacingAndGlyphs">OpenPos</text>
<text x="515" y="448" font-size="18" fill="#7a7a7a" textLength="50" lengthAdjust="spacingAndGlyphs">0. 00%</text>
<text x="493" y="473" font-size="17" class="hb" fill="#808080" textLength="69" lengthAdjust="spacingAndGlyphs">Daily P/L</text>
<text x="505" y="493" font-size="20" fill="#d8d818" textLength="60" lengthAdjust="spacingAndGlyphs">-0. 25%</text>
</g>

<!-- ==== Subpanels W1 ==== -->
<g clip-path="url(#cp2)"><g class="z" transform="translate(0,600) scale(.40816,.33333)">
<path class="md" d="M35 152H1433M35 184H1433M35 220H1433M35 307H1433"/>
<polyline class="lb" points="750,130 820,135 900,155 980,178 1037,155"/>
<polyline class="lb" points="750,195 775,172 810,195 850,250 910,262 960,235 1037,218"/>
<polyline class="ye" points="750,152 790,155 870,207 950,205 1037,185"/>
<polyline class="dg" points="750,125 790,170 855,265 900,210 945,188 1000,175 1037,145"/>
<polyline class="rd" points="750,118 790,140 840,240 890,262 950,205 1000,195 1037,170"/>
</g></g>
<g class="z" transform="translate(0,600) scale(.40816,.33333)">
<path class="mg" d="M35 514H1433M35 548H1433M35 580H1433"/>
<polyline class="lt" points="750,435 790,423 840,445 900,440 950,478 1000,450 1035,448"/>
<polyline class="lt" points="750,520 790,600 850,658 950,660 1000,630 1035,595"/>
<polyline class="lt" points="150,590 220,600 260,650 370,680 420,640 500,650 560,685 620,650 670,580"/>
<polyline class="lt" points="390,585 410,615 440,628"/>
<polyline class="yt" points="750,485 830,545 910,553 960,572 1035,520"/>
<polyline class="yt" points="300,585 330,600 360,602 420,632 500,628 560,585"/>
<polyline class="lm" points="750,480 770,600 800,640 830,625 885,470 950,600 990,470 1035,495"/>
<polyline class="lm" points="145,585 155,628 170,590"/>
<polyline class="lm" points="220,580 250,635 280,625 300,630 440,635 465,600 490,620 510,580"/>
<polyline class="rd" points="750,495 780,570 820,628 860,575 910,505 970,570 1037,490"/>
<polyline class="rd" points="250,585 280,625 350,632 440,632 490,620 525,585"/>
<path class="md" d="M35 850H1433"/>
<polyline class="gd" points="37,770 130,775 200,795 280,820 340,790 390,740 450,720 560,745 640,815 700,830 740,820 850,830 950,838 1030,835"/>
<polyline class="pd" points="37,930 130,925 200,900 280,880 350,920 430,975 520,970 600,925 670,865 760,880 850,870 1030,865"/>
<polyline class="gr" points="37,772 90,770"/>
<polyline class="re" points="90,770 150,797 200,805 245,850 285,885 340,940 380,970 440,978"/>
<polyline class="gr" points="440,978 500,965 560,920 620,845 680,828 735,812"/>
<polyline class="re" points="735,812 780,835 810,870 850,875"/>
<polyline class="gr" points="850,875 890,855"/>
<polyline class="re" points="890,855 960,865"/>
<polyline class="gr" points="960,865 1000,835 1037,827"/>
<path d="M37 1040v10M194 1040v10M351 1040v10M508 1040v10M665 1040v10M822 1040v10M979 1040v10" stroke="#fff" stroke-width="1"/>
</g>
<rect x="14.500" y="134.500" width="570.500" height="484.500" class="pb"/>
<rect x="14.500" y="621.500" width="570.500" height="108.500" class="pb"/><rect x="14.500" y="733.500" width="570.500" height="99.500" class="pb"/><rect x="14.500" y="835.500" width="570.500" height="95.500" class="pb"/><rect x="14.500" y="933.500" width="570.500" height="13" class="pb"/>
<text x="309" y="634" class="t">56.4843 52.3798</text>
<text x="516" y="645" font-size="13" class="hb" fill="#777" textLength="58" lengthAdjust="spacingAndGlyphs">M1 WAIT</text>
<text x="19" y="848" class="t" textLength="422" lengthAdjust="spacingAndGlyphs">Spb f1 USDJPY_3S M1 - Super passband filter (40.00,60.00,10) 0.0014 0.0000 -0.0014 0.0022 0.0022</text>
<text x="197" y="946" font-size="12" fill="#e0e0e0">15</text>
<g>
<text x="588" y="633" class="a">67.4648</text><text x="588" y="655" class="a">55</text><text x="588" y="665" class="a">50</text><text x="588" y="678" class="a">45</text><text x="588" y="707" class="a">32</text><text x="588" y="728" class="a">19.4955</text><text x="588" y="744" class="a">129.374</text><text x="588" y="817" class="a">0.00</text><text x="588" y="831" class="a">-32.028</text><text x="588" y="847" class="a">0.0124</text><text x="588" y="887" class="a">0.00</text><text x="588" y="929" class="a">-0.0128</text><text x="588" y="946" class="a">0.00</text>
<rect x="586.500" y="766" width="11.500" height="32.500" fill="#e010d0"/><text x="587" y="775" class="a m">68</text><text x="587" y="786" class="a m">50</text><text x="587" y="797" class="a m">32</text>
</g>
<g><text x="14" y="960" class="a b">12 Sep 2022</text><text x="78" y="960" class="a b">12 Sep 06:10</text><text x="142" y="960" class="a b">12 Sep 06:11</text><text x="206" y="960" class="a b">12 Sep 06:12</text><text x="271" y="960" class="a b">12 Sep 06:12</text><text x="335" y="960" class="a b">12 Sep 06:13</text><text x="399" y="960" class="a b">12 Sep 06:14</text></g>

<!-- ==== Subpanels W2 ==== -->
<g clip-path="url(#cp2b)"><g class="z" transform="translate(640,600) scale(.40816,.33333)">
<path class="md" d="M30 78H1427M30 160H1427M30 190H1427M30 220H1427M30 301H1427"/>
<polyline class="lb" points="33,85 100,105 180,130 270,190 350,235 400,238 450,205 520,145 590,125 640,132 750,185 835,183"/>
<polyline class="lb" points="33,182 130,270 210,350 270,372 340,365 420,330 520,315 600,300 730,250 835,236"/>
<polyline class="ye" points="33,130 120,190 200,240 270,280 340,297 400,288 500,240 600,210 700,212 835,210"/>
<polyline class="dg" points="33,220 110,310 190,365 260,372 310,350 380,255 450,180 510,145 570,165 640,207 730,232 790,200 835,185"/>
<polyline class="rd" points="33,215 120,300 200,355 260,372 330,372 380,320 450,210 520,150 570,142 650,165 750,215 835,216"/>
</g></g>
<g class="z" transform="translate(640,600) scale(.40816,.33333)">
<path class="mg" d="M30 508H1427M30 538H1427M30 568H1427"/>
<polyline class="lt" points="33,420 100,445 180,510 260,570 300,590 360,490 470,430 560,418 710,418 770,442 835,448"/>
<polyline class="lt" points="33,630 130,670 230,663 295,635 340,670 400,685 500,660 550,637 680,628 750,637 835,635"/>
<polyline class="yt" points="33,525 130,565 230,605 310,612 430,570 540,527 710,525 780,542 835,542"/>
<polyline class="lm" points="33,620 190,620 270,610 310,585 350,475 375,458 420,473 480,462 525,475 585,615 640,612 700,548 760,570 800,487 835,487"/>
<polyline class="rd" points="33,607 70,620 230,620 300,610 350,570 420,480 490,465 530,478 600,540 660,600 700,595 760,570 835,525"/>
<path class="md" d="M30 848H1427"/>
<polyline class="gd" points="33,775 100,795 180,775 240,740 300,715 400,730 530,800 620,823 740,817 835,822"/>
<polyline class="pd" points="33,920 100,895 180,920 270,960 340,968 430,945 540,885 640,868 735,875 835,868"/>
<polyline class="re" points="33,848 130,935 190,968 270,978"/>
<polyline class="gr" points="270,978 310,968 370,920 450,880 510,853"/>
<polyline class="re" points="510,853 640,882"/>
<polyline class="gr" points="640,882 700,870"/>
<polyline class="re" points="700,870 740,877"/>
<polyline class="gr" points="740,877 790,855 835,843"/>
<path d="M32 1040v10M189 1040v10M346 1040v10M503 1040v10M659 1040v10M816 1040v10" stroke="#fff" stroke-width="1"/>
</g>
<rect x="652.500" y="134.500" width="570" height="484.500" class="pb"/>
<rect x="652.500" y="621.500" width="570" height="108.500" class="pb"/><rect x="652.500" y="733.500" width="570" height="99.500" class="pb"/><rect x="652.500" y="835.500" width="570" height="95.500" class="pb"/><rect x="652.500" y="933.500" width="570" height="13" class="pb"/>
<text x="657" y="634" class="t" textLength="359" lengthAdjust="spacingAndGlyphs">tdi ob1 M1 TDI of Slow rsi of JMA (10,0,0) 51.3825 46.9496 42.5166 51.1804 46.2054</text>
<text x="1154" y="645" font-size="13" class="hb" fill="#777" textLength="58" lengthAdjust="spacingAndGlyphs">M1 WAIT</text>
<text x="657" y="746" class="t" textLength="211" lengthAdjust="spacingAndGlyphs">TDI Alerts v 104.004 48.336 -7.332 80.114 58.692</text>
<text x="657" y="848" class="t" textLength="422" lengthAdjust="spacingAndGlyphs">Spb f1 USDJPY_6S M1 - Super passband filter (40.00,60.00,10) 0.0020 0.0000 -0.0020 0.0004 0.0004</text>
<text x="743" y="946" font-size="12" fill="#e0e0e0">15</text>
<g>
<text x="1226.500" y="632" class="a">69.537</text><text x="1226.500" y="658" class="a">55</text><text x="1226.500" y="668" class="a">50</text><text x="1226.500" y="678" class="a">45</text><text x="1226.500" y="705" class="a">32</text><text x="1226.500" y="728" class="a">17.9823</text><text x="1226.500" y="744" class="a">131.676</text><text x="1226.500" y="812" class="a">0.00</text><text x="1226.500" y="831" class="a">-45.087</text><text x="1226.500" y="847" class="a">0.0123</text><text x="1226.500" y="887" class="a">0.00</text><text x="1226.500" y="929" class="a">-0.0133</text><text x="1226.500" y="946" class="a">0.00</text>
<rect x="1224.500" y="764.700" width="11.500" height="30" fill="#e010d0"/><text x="1225" y="773" class="a m">68</text><text x="1225" y="783" class="a m">50</text><text x="1225" y="793" class="a m">32</text>
</g>
<g><text x="652" y="960" class="a b">12 Sep 2022</text><text x="716" y="960" class="a b">12 Sep 06:11</text><text x="780" y="960" class="a b">12 Sep 06:12</text><text x="844" y="960" class="a b">12 Sep 06:13</text><text x="908" y="960" class="a b">12 Sep 06:14</text><text x="972" y="960" class="a b">12 Sep 06:14</text></g>

<!-- ==== Subpanels W3 ==== -->
<g clip-path="url(#cp2c)"><g class="z" transform="translate(1280,600) scale(.40816,.33333)">
<path class="md" d="M25 133H1423M25 248H1423M25 292H1423M25 338H1423"/>
<polyline class="lb" points="25,243 100,210 160,150 230,115 330,100 450,105 620,103 720,125 830,162"/>
<polyline class="lb" points="25,280 140,275 250,250 340,230 430,170 530,130 580,140 650,240 730,340 790,375 830,375"/>
<polyline class="ye" points="25,262 120,240 230,185 340,155 480,125 580,122 660,170 760,250 830,267"/>
<polyline class="dg" points="25,265 60,210 120,170 170,125 230,105 340,115 420,95 530,98 580,170 640,295 700,340 760,360 830,305"/>
<polyline class="rd" points="25,290 60,280 120,220 180,150 250,110 400,105 560,100 600,170 650,290 720,350 780,360 830,347"/>
</g></g>
<g class="z" transform="translate(1280,600) scale(.40816,.33333)">
<path class="mg" d="M25 538H1423M25 574H1423M25 608H1423"/>
<polyline class="lt" points="25,480 100,455 180,447 300,432 350,445 380,473 520,475 600,418 640,415 750,445 830,482"/>
<polyline class="lt" points="25,678 120,647 220,643 300,612 350,570 385,512 510,512 560,570 640,665 750,685 830,680"/>
<polyline class="yt" points="25,590 100,550 220,545 350,503 440,490 550,505 650,542 760,570 830,580"/>
<polyline class="lm" points="25,497 70,475 130,490 190,512 240,488 340,495 400,478 495,487 575,655 635,665 700,580 770,575 830,527"/>
<polyline class="rd" points="25,590 130,487 210,500 340,492 490,485 530,505 610,620 675,650 760,595 830,560"/>
<path class="md" d="M25 853H1423"/>
<polyline class="gd" points="25,828 130,775 300,735 500,715 620,745 720,800 830,840"/>
<polyline class="pd" points="25,883 100,905 200,945 320,970 450,980 580,970 680,930 770,880 830,868"/>
<polyline class="gr" points="25,812 80,770 145,750"/>
<polyline class="re" points="145,750 190,753"/>
<polyline class="gr" points="190,753 240,730"/>
<polyline class="re" points="240,730 300,730"/>
<polyline class="gr" points="300,730 460,722"/>
<polyline class="re" points="460,722 520,735 620,820 680,830 760,845"/>
<polyline class="gr" points="760,848 830,845"/>
<path d="M27 1040v10M184 1040v10M341 1040v10M498 1040v10M655 1040v10M811 1040v10" stroke="#fff" stroke-width="1"/>
</g>
<rect x="1290.500" y="134.500" width="570.500" height="484.500" class="pb"/>
<rect x="1290.500" y="621.500" width="570.500" height="108.500" class="pb"/><rect x="1290.500" y="733.500" width="570.500" height="99.500" class="pb"/><rect x="1290.500" y="835.500" width="570.500" height="95.500" class="pb"/><rect x="1290.500" y="933.500" width="570.500" height="13" class="pb"/>
<text x="1295" y="634" class="t" textLength="359" lengthAdjust="spacingAndGlyphs">tdi ob1 M1 TDI of Slow rsi of JMA (10,0,0) 64.4631 52.6182 40.7733 48.8285 43.8747</text>
<text x="1792" y="645" font-size="13" class="hb" fill="#777" textLength="58" lengthAdjust="spacingAndGlyphs">M1 WAIT</text>
<text x="1295" y="746" class="t" textLength="205" lengthAdjust="spacingAndGlyphs">TDI Alerts v 99.571 46.474 -6.623 74.225 57.244</text>
<text x="1295" y="848" class="t" textLength="426" lengthAdjust="spacingAndGlyphs">Spb f1 USDJPY_18S M1 - Super passband filter (40.00,60.00,10) 0.0030 0.0000 -0.0030 0.0015 0.0015</text>
<text x="1533" y="946" font-size="12" fill="#e0e0e0">15</text>
<g>
<text x="1864.500" y="633" class="a">75.08</text><text x="1864.500" y="649" class="a">68</text><text x="1864.500" y="687" class="a">55</text><text x="1864.500" y="702" class="a">50</text><text x="1864.500" y="717" class="a">45</text><text x="1864.500" y="728" class="a">39.1396</text><text x="1864.500" y="744" class="a">141.197</text><text x="1864.500" y="827" class="a">0.00</text><text x="1864.500" y="831" class="a">-18.88</text><text x="1864.500" y="847" class="a">0.0285</text><text x="1864.500" y="888" class="a">0.00</text><text x="1864.500" y="929" class="a">-0.0275</text><text x="1864.500" y="946" class="a">0.00</text>
<rect x="1862.500" y="774.300" width="11.500" height="33.400" fill="#e010d0"/><text x="1863" y="783" class="a m">68</text><text x="1863" y="795" class="a m">50</text><text x="1863" y="806" class="a m">32</text>
</g>
<g><text x="1290" y="960" class="a b">12 Sep 2022</text><text x="1354" y="960" class="a b">12 Sep 06:04</text><text x="1418" y="960" class="a b">12 Sep 06:07</text><text x="1482" y="960" class="a b">12 Sep 06:09</text><text x="1546" y="960" class="a b">12 Sep 06:12</text><text x="1610" y="960" class="a b">12 Sep 06:14</text></g>

<!-- ============ FLOATING WINDOW ============ -->
<path d="M10.500 793V182q0-6 6-6H300q5 0 5 6V793z" fill="#d6e2ee" stroke="#8c9cae"/>
<rect x="12" y="177" width="292" height="29" fill="url(#capg)"/>
<use href="#cic" x="21" y="188"/><text x="40" y="199" class="cap">USDJPY_2S,M1 (offline)</text>
<use href="#bmin" x="197" y="186"/><use href="#bmax" x="230.500" y="186"/><use href="#bcl" x="264.500" y="186"/>
<rect x="18" y="207" width="279" height="577" fill="#15202d"/>
<g clip-path="url(#cf)">
<g class="z" transform="translate(0,100) scale(.40816,.33333)">
<rect x="55" y="332" width="60" height="1000" fill="#7a3f52"/>
<rect x="115" y="332" width="177" height="1000" fill="#33476b"/>
</g>
<text x="100" y="257" font-size="42" fill="#1f9fc6" textLength="88" lengthAdjust="spacingAndGlyphs" style="font-family:'Liberation Serif',serif">XARD</text>
<g class="z" transform="translate(0,100) scale(.40816,.33333)">
<path class="wl" style="stroke-width:1" d="M55 555H613"/>
<path class="gl" d="M55 382H295"/>
<path class="bc" d="M214 455V605M272 605V630M272 700V730M136 925V1005M155 880V975"/>
<path class="bw" d="M272 730V780"/>
<path class="pk" d="M195 420V435M115 1100V1250"/>
<polyline class="tn" points="190,720 240,590 295,600"/>
<polyline class="tn" points="200,760 240,640 290,620"/>
<polyline class="tp" points="55,910 110,945 150,970"/>
<polyline class="bl" style="stroke-width:4" points="180,990 210,880 295,780"/>
<polyline class="bl" style="stroke-width:6" points="180,1000 230,930 300,850"/>
<polyline class="bl" style="stroke-width:4" points="210,910 300,860"/>
<polyline class="ma0" points="55,848 160,860 295,835"/>
<polyline class="ma" style="stroke:#ff88bb" points="55,848 160,860"/>
<polyline class="ma" points="160,860 295,835"/>
<polyline class="re" style="stroke-width:3" points="60,885 150,895"/>
<polyline class="cr" points="55,985 110,1040"/>
<polyline class="dr" points="55,1040 115,1160"/>
<polyline class="nb" points="115,1160 150,1110 190,860 240,700 295,620"/>
<polyline class="wl" points="55,755 110,620 190,420"/>
<ellipse cx="192" cy="382" rx="31" ry="37" fill="#fff8f8"/>
</g>
<text x="27" y="222" font-size="11.500" fill="#fff">USDJPY_2S,M1</text>
<text x="31" y="235" font-size="11.500" fill="#f0f0f0" textLength="600" lengthAdjust="spacingAndGlyphs">Balance = 10008399.04, Equity = 10007803.47, Margin = 2159.82775, Free Margin = 10005643.64225, Total Orders = 3, Lots = 30.0,</text>
<rect x="134.500" y="211.500" width="89" height="18.500" fill="#4c4c4c" stroke="#111"/>
<text x="149" y="226" font-size="15" fill="#1fd01f" textLength="58" lengthAdjust="spacingAndGlyphs">guppy ON</text>
<text x="224" y="223" font-size="11.500" fill="#f0f0f0">码</text>
<circle cx="239.500" cy="220" r="5.500" fill="none" stroke="#eee"/><path d="M237 222q2.500 2.500 5 0M237.500 218.500h.8M241 218.500h.8" stroke="#eee" fill="none"/>
<path d="M129 211h10l-5 5z" fill="#fff"/>
<rect x="44" y="312" width="79" height="18" fill="#5e5e5e" stroke="#111"/><text x="69" y="327" font-size="14" fill="#cc2020">S&amp;R</text>
<rect x="30.500" y="442" width="38" height="23" fill="#2a2a2a" stroke="#5a5a5a"/><text x="36" y="459" font-size="14" fill="#999">OFF</text>
</g>
<g clip-path="url(#chud)">
<g transform="translate(-334,76)">
<rect x="481" y="154" width="92.500" height="355" fill="#fff"/><rect x="486" y="159" width="83" height="165" fill="#1a2433"/><rect x="486" y="357" width="83" height="147" fill="#1a2433"/>
<text x="484" y="183" font-size="27" class="hb us" fill="#fff" textLength="81" lengthAdjust="spacingAndGlyphs">USDJPY_</text>
<text x="517" y="202" font-size="21" class="hb" fill="#16e6ef" textLength="48" lengthAdjust="spacingAndGlyphs">0.00</text>
<text x="497" y="219" font-size="14" class="hb" fill="#fff" textLength="63" lengthAdjust="spacingAndGlyphs" style="font-family:'DejaVu Sans Mono',monospace">SPD:0.0</text>
<text x="526" y="235" font-size="18" class="hb" fill="#18e618" textLength="39" lengthAdjust="spacingAndGlyphs">0:58</text>
<text x="489" y="250" font-size="15.500" class="hb" fill="#16e6ef" textLength="76" lengthAdjust="spacingAndGlyphs">Daily Open</text>
<text x="518" y="267" font-size="18.500" class="hb" fill="#16e6ef" textLength="39" lengthAdjust="spacingAndGlyphs">0.00</text>
<text x="492" y="285" font-size="16" fill="#fff" textLength="34" lengthAdjust="spacingAndGlyphs">P2Op</text><text x="555" y="285" font-size="15" class="hb" fill="#16b4c8">0</text>
<text x="497" y="302" font-size="15" fill="#c8c8c8" textLength="29" lengthAdjust="spacingAndGlyphs">HiLo</text><text x="555" y="302" font-size="15" class="hb" fill="#bbb">0</text>
<text x="499.500" y="318" font-size="15" fill="#eee" textLength="27" lengthAdjust="spacingAndGlyphs">ADR</text><text x="555" y="318" font-size="15" class="hb" fill="#1fa81f">0</text>
<rect x="486" y="324" width="83" height="33" fill="#fff9f9"/>
<text x="532" y="348" font-size="24" class="hb" fill="#e40000" textLength="30" lengthAdjust="spacingAndGlyphs">0%</text>
<text x="489" y="378" font-size="17" class="hb" fill="#808080" textLength="76" lengthAdjust="spacingAndGlyphs">OpenPips</text>
<text x="512.500" y="401" font-size="24" fill="#7a7a7a" textLength="52" lengthAdjust="spacingAndGlyphs">0. 00</text>
<text x="491" y="428" font-size="17" class="hb" fill="#808080" textLength="72" lengthAdjust="spacingAndGlyphs">OpenPos</text>
</g></g>
<rect x="131" y="513" width="119" height="27" fill="#1e90ff"/>
<rect x="23.500" y="518" width="153" height="21" fill="#1e90ff" stroke="#0a0f16" stroke-width="1.500"/>
<text x="176" y="530" font-size="22" font-style="italic" fill="#fff" textLength="72" lengthAdjust="spacingAndGlyphs">EPRINT</text>
<text x="46" y="537" font-size="22" font-weight="bold" fill="#a3b3cc" textLength="104" lengthAdjust="spacingAndGlyphs">UP TREND</text>
<rect x="22.500" y="211.500" width="228" height="329" class="pb"/>
<rect x="22.500" y="543.500" width="228" height="73" class="pb"/><rect x="22.500" y="618.500" width="228" height="67.500" class="pb"/><rect x="22.500" y="688.500" width="228" height="65" class="pb"/><rect x="22.500" y="755.500" width="228" height="8" class="pb"/>
<g clip-path="url(#cfp2)"><g class="z" transform="translate(0,100) scale(.40816,.33333)">
<path class="md" d="M55 1408H613M55 1457H613"/>
<polyline class="lb" points="57,1385 130,1395 190,1412 240,1405 293,1385"/>
<polyline class="lb" points="57,1530 150,1535 220,1500 293,1478"/>
<polyline class="ye" points="57,1458 120,1468 200,1465 293,1430"/>
<polyline class="dg" points="57,1430 75,1490 115,1510 160,1480 200,1420 230,1385 275,1360"/>
<polyline class="rd" points="57,1410 100,1430 150,1472 200,1470 250,1440 293,1390"/>
</g></g>
<g clip-path="url(#cfp3)"><g class="z" transform="translate(0,600) scale(.40816,.33333)">
<path class="mg" d="M55 140H613M55 167H613M55 194H613"/>
<polyline class="lt" points="57,95 120,95 200,75 290,70"/>
<polyline class="lt" points="57,248 120,243 170,228 290,227"/>
<polyline class="yt" points="57,172 130,172 200,155 293,150"/>
<polyline class="lm" points="57,210 95,235 130,205 180,95 240,115 293,127"/>
<polyline class="rd" points="57,168 130,205 200,160 250,115 293,110"/>
</g></g>
<g clip-path="url(#cfp4)"><g class="z" transform="translate(0,600) scale(.40816,.33333)">
<path class="md" d="M55 382H613"/>
<polyline class="gd" points="57,342 130,333 230,330 285,315"/>
<polyline class="pd" points="57,425 130,428 210,430 285,448"/>
<polyline class="gr" points="130,440 170,395 195,335 240,295 293,278"/>
<polyline class="re" points="57,430 100,450 130,440"/>
</g></g>
<path d="M23 763v4M87 763v4" stroke="#fff"/>
<g clip-path="url(#cfp2)"><text x="27" y="555" class="t" textLength="255" lengthAdjust="spacingAndGlyphs">tdi ob1 M1 TDI of Slow rsi of JMA (10,0,0) 52.6976 4</text></g>
<text x="182" y="565" font-size="13" class="hb" fill="#777" textLength="58" lengthAdjust="spacingAndGlyphs">M1 WAIT</text>
<text x="27" y="632" class="t" textLength="208" lengthAdjust="spacingAndGlyphs">TDI Alerts v 114.104 60.852 7.599 76.891 87.669</text>
<g clip-path="url(#cfp4)"><text x="27" y="701" class="t" textLength="222" lengthAdjust="spacingAndGlyphs">Spb f1 USDJPY_2S M1 - Super passband filter (40.00</text></g>
<g>
<text x="256" y="217" class="a">143.430</text><text x="256" y="257" class="a">143.425</text><text x="256" y="299" class="a">143.420</text><text x="256" y="340" class="a">143.415</text><text x="256" y="380" class="a">143.410</text><text x="256" y="421" class="a">143.405</text><text x="256" y="462" class="a">143.400</text><text x="256" y="503" class="a">143.395</text>
<rect x="252" y="281" width="41" height="10" fill="#fff"/><text x="256" y="290" class="a" style="fill:#111">143.421</text>
<text x="254" y="554" class="a">58.2372</text><text x="254" y="559" class="a">55</text><text x="254" y="574" class="a">50</text><text x="254" y="590" class="a">45</text><text x="254" y="614" class="a">35.13</text>
<text x="254" y="630" class="a">123.429</text><text x="254" y="683" class="a">0.00</text><text x="262" y="683" class="a">331</text>
<text x="254" y="700" class="a">0.0026</text><text x="254" y="731" class="a">0.00</text><text x="254" y="750" class="a">-0.0018</text>
<rect x="252" y="641.300" width="12" height="28.700" fill="#e010d0"/><text x="253" y="650" class="a m">68</text><text x="253" y="659" class="a m">50</text><text x="253" y="668" class="a m">32</text>
<text x="22" y="777" class="a b">12 Sep 2022</text><text x="86" y="777" class="a b">12 Sep 06:14</text>
</g>

<!-- ============ bottom tabs ============ -->
<g>
<rect x="0" y="976" width="1920" height="30" fill="#ababab"/>
<path d="M0 976H1920" stroke="#5a6a78"/>
<path d="M2.500 1005V979q0-2 2-2H158q2 0 2 2v26z" fill="url(#capg)" stroke="#59677a"/>
<path d="M162.500 1005V979q0-2 2-2H318q2 0 2 2v26z" fill="url(#capg)" stroke="#59677a"/>
<path d="M322.500 1005V979q0-2 2-2H478q2 0 2 2v26z" fill="url(#capg)" stroke="#59677a"/>
<path d="M482.500 1005V979q0-2 2-2H638q2 0 2 2v26z" fill="url(#capg)" stroke="#59677a"/>
<use href="#cic" x="8" y="985"/><text x="27" y="997" font-size="14" fill="#9aa2aa">BT...</text>
<use href="#brs" x="58" y="983"/><use href="#bmax" x="92" y="983"/><use href="#bcl" x="126" y="983"/>
<use href="#cic" x="168" y="985"/><text x="187" y="997" font-size="14" fill="#9aa2aa">GB...</text>
<use href="#brs" x="218" y="983"/><use href="#bmax" x="252" y="983"/><use href="#bcl" x="286" y="983"/>
<use href="#cic" x="328" y="985"/><text x="347" y="997" font-size="14" fill="#9aa2aa">US...</text>
<use href="#brs" x="378" y="983"/><use href="#bmax" x="412" y="983"/><use href="#bcl" x="446" y="983"/>
<use href="#cic" x="488" y="985"/><text x="507" y="997" font-size="14" fill="#9aa2aa">EU...</text>
<use href="#brs" x="538" y="983"/><use href="#bmax" x="572" y="983"/><use href="#bcl" x="606" y="983"/>
<rect x="0" y="1006" width="1920" height="2" fill="#111"/>
<rect x="879" y="1006" width="154" height="2" fill="#fff"/>
</g>
</svg>
<script>
(function(){
var ns="http://www.w3.org/2000/svg";
document.querySelectorAll(".z polyline").forEach(function(el){
  var n=el.getAttribute("points").trim().split(/\s+/).map(function(s){return s.split(",").map(Number)});
  if(n.length<3)return;
  var d="M"+n[0][0]+" "+n[0][1];
  for(var i=0;i<n.length-1;i++){
    var p0=n[i-1]||n[i],p1=n[i],p2=n[i+1],p3=n[i+2]||p2;
    d+="C"+(p1[0]+(p2[0]-p0[0])/6).toFixed(1)+" "+(p1[1]+(p2[1]-p0[1])/6).toFixed(1)+" "+(p2[0]-(p3[0]-p1[0])/6).toFixed(1)+" "+(p2[1]-(p3[1]-p1[1])/6).toFixed(1)+" "+p2[0]+" "+p2[1];
  }
  var p=document.createElementNS(ns,"path");
  p.setAttribute("d",d);
  if(el.getAttribute("class"))p.setAttribute("class",el.getAttribute("class"));
  if(el.getAttribute("style"))p.setAttribute("style",el.getAttribute("style"));
  el.parentNode.replaceChild(p,el);
});
})();
</script>
</body></html>
